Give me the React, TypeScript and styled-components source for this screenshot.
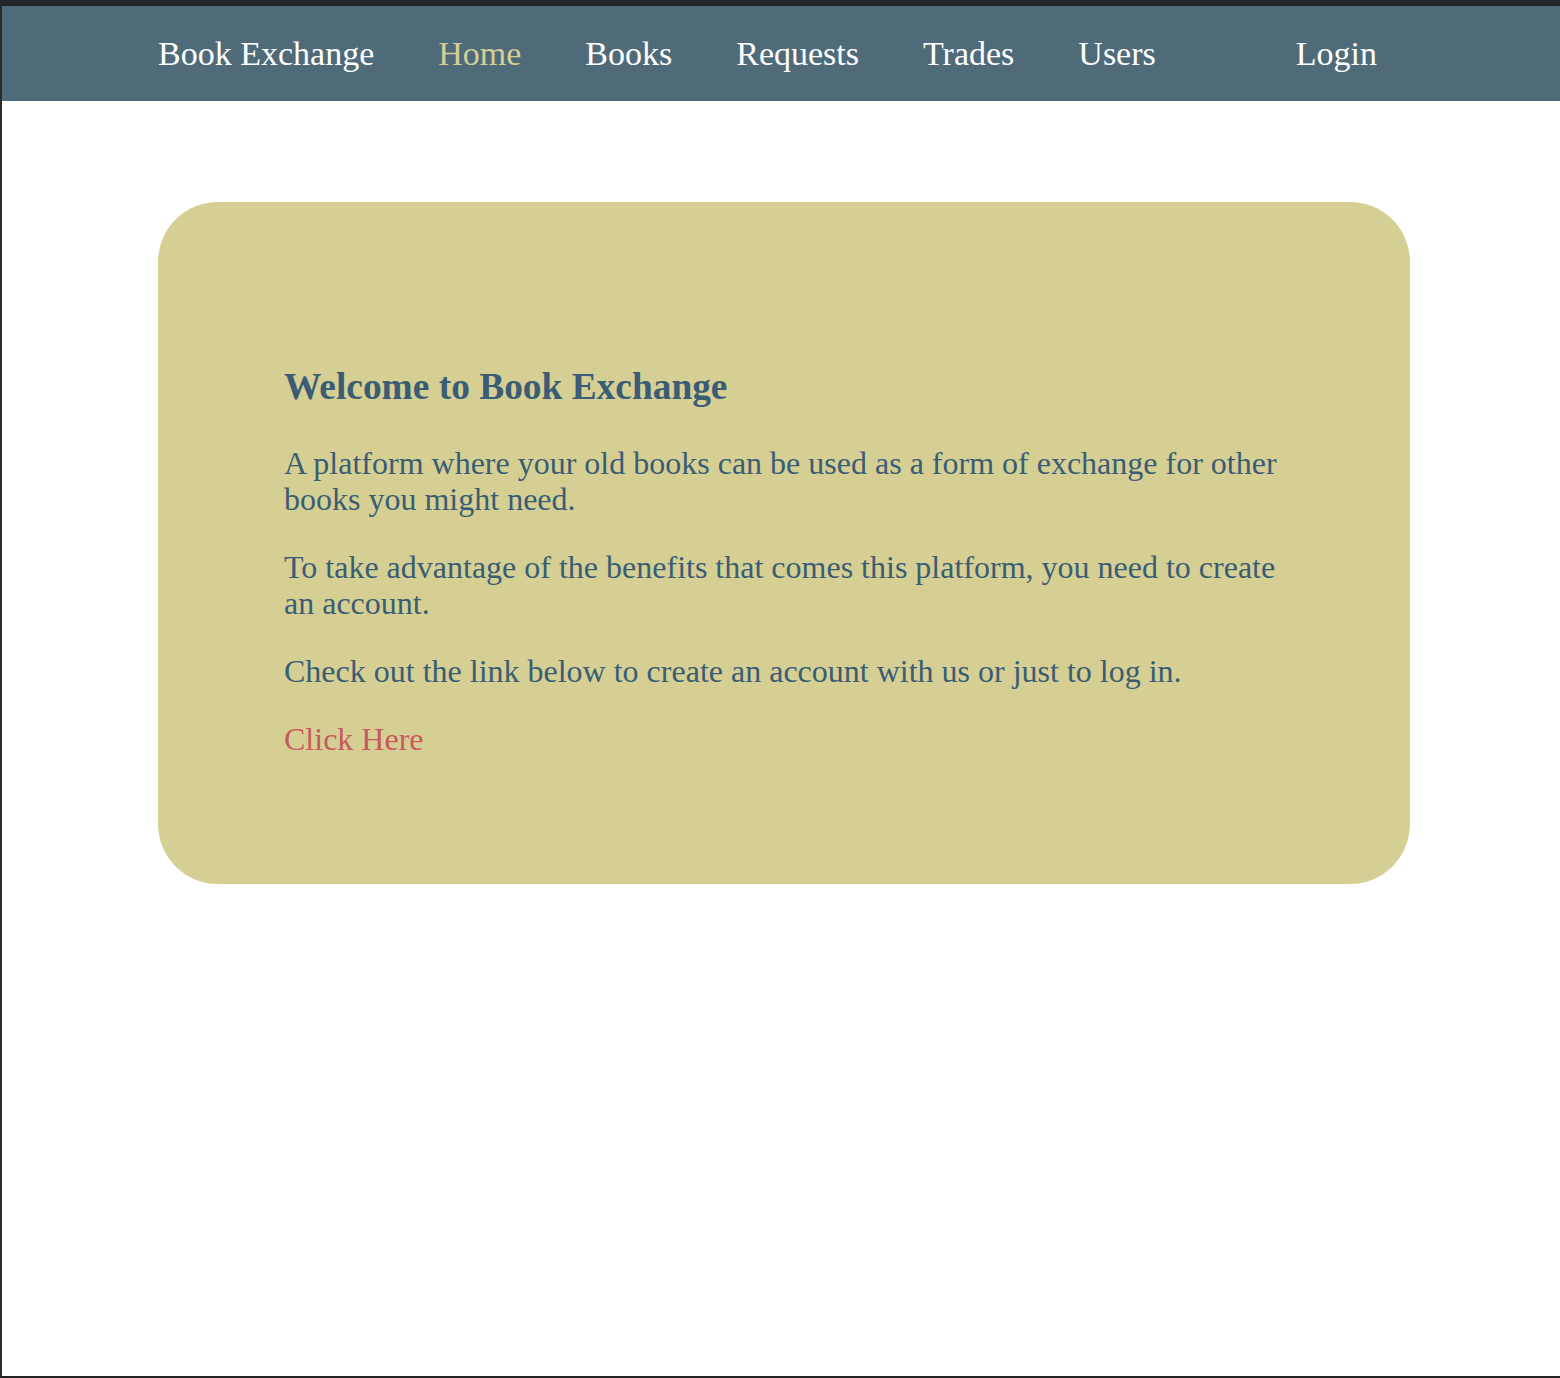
import React from "react";
import styled, { createGlobalStyle } from "styled-components";

const GlobalStyle = createGlobalStyle`
  html, body { margin: 0; padding: 0; background: #ffffff; }
  body { font-family: "Liberation Serif", "Times New Roman", serif; }
  * { box-sizing: border-box; }
`;

const Frame = styled.div`
  min-height: 1378px;
  border-top: 6px solid #23272b;
  border-left: 2px solid #2a2a2a;
  border-bottom: 2px solid #222222;
  display: flex;
  flex-direction: column;
`;

const NavBar = styled.nav`
  height: 95px;
  background: #4f6b7a;
  display: flex;
  align-items: center;
  padding-left: 156px;
  gap: 64px;
`;

const NavLink = styled.a<{ $active?: boolean; $push?: number }>`
  font-size: 34px;
  color: ${(p) => (p.$active ? "#d5cf93" : "#ffffff")};
  text-decoration: none;
  line-height: 1;
  margin-left: ${(p) => (p.$push ? `${p.$push}px` : "0")};
  cursor: pointer;
`;

const Main = styled.main`
  padding: 101px 0 0 156px;
`;

const Card = styled.section`
  width: 1252px;
  background: #d5cf93;
  border-radius: 60px;
  padding: 163px 126px 127px;
  color: #3a5d75;
`;

const Heading = styled.h3`
  margin: 0 0 37px;
  font-size: 37.4px;
  font-weight: bold;
  line-height: 43px;
`;

const Paragraph = styled.p`
  margin: 0 0 32px;
  font-size: 32px;
  line-height: 36px;
  &:last-child { margin-bottom: 0; }
`;

const CtaLink = styled.a`
  color: #c75a5e;
  text-decoration: none;
  cursor: pointer;
`;

export default function App() {
  return (
    <>
      <GlobalStyle />
      <Frame>
        <NavBar>
          <NavLink>Book Exchange</NavLink>
          <NavLink $active>Home</NavLink>
          <NavLink>Books</NavLink>
          <NavLink>Requests</NavLink>
          <NavLink>Trades</NavLink>
          <NavLink>Users</NavLink>
          <NavLink $push={76}>Login</NavLink>
        </NavBar>
        <Main>
          <Card>
            <Heading>Welcome to Book Exchange</Heading>
            <Paragraph>
              A platform where your old books can be used as a form of exchange for other books you might need.
            </Paragraph>
            <Paragraph>
              To take advantage of the benefits that comes this platform, you need to create an account.
            </Paragraph>
            <Paragraph>
              Check out the link below to create an account with us or just to log in.
            </Paragraph>
            <Paragraph>
              <CtaLink>Click Here</CtaLink>
            </Paragraph>
          </Card>
        </Main>
      </Frame>
    </>
  );
}
